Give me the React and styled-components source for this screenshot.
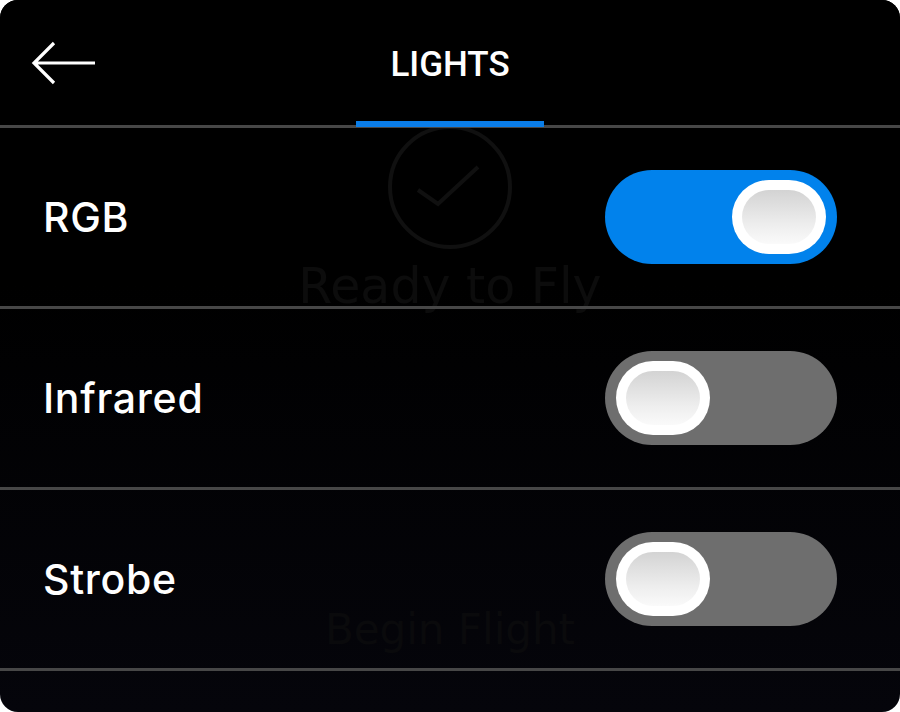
import React, { useState } from "react";
import styled, { createGlobalStyle } from "styled-components";

const GlobalStyle = createGlobalStyle`
  html, body {
    margin: 0;
    padding: 0;
    background: #ffffff;
  }
  * {
    box-sizing: border-box;
  }
`;

const Panel = styled.div`
  position: relative;
  width: 900px;
  height: 712px;
  border-radius: 18px;
  overflow: hidden;
  background: linear-gradient(180deg, #000000 0%, #000000 40%, #05050b 100%);
  font-family: "Inter", "Noto Sans", sans-serif;
`;

const Backdrop = styled.div`
  position: absolute;
  inset: 0;
  display: flex;
  flex-direction: column;
  align-items: center;
  padding-top: 126px;
  pointer-events: none;
  z-index: 0;
  font-family: "DejaVu Sans", "Inter", sans-serif;
`;

const GhostTitle = styled.div`
  margin-top: 2px;
  font-size: 49px;
  font-weight: 400;
  color: #0c0c0c;
`;

const GhostButton = styled.div`
  margin-top: 290px;
  font-size: 42px;
  font-weight: 400;
  color: #0a0a0c;
`;

const Content = styled.div`
  position: relative;
  z-index: 1;
  display: flex;
  flex-direction: column;
`;

const Header = styled.div`
  position: relative;
  height: 128px;
  display: flex;
  align-items: center;
  justify-content: center;
  background: #000000;
  border-bottom: 3px solid #474747;
`;

const BackButton = styled.button`
  position: absolute;
  left: 30px;
  top: 38px;
  width: 70px;
  height: 50px;
  padding: 0;
  border: none;
  background: none;
  cursor: pointer;
  display: flex;
  align-items: center;
`;

const Tab = styled.div`
  position: relative;
  height: 100%;
  width: 188px;
  display: flex;
  justify-content: center;
  padding-top: 45px;
  font-family: "Roboto", "Liberation Sans", sans-serif;
  font-size: 35px;
  font-weight: 500;
  color: #ffffff;
  line-height: 1;
  border-bottom: 6px solid #0a7de8;
  margin-bottom: -3px;
`;

const Row = styled.div`
  height: 181px;
  display: flex;
  align-items: center;
  justify-content: space-between;
  padding: 0 63px 0 43px;
  border-bottom: 3px solid #474747;
`;

const Label = styled.span`
  font-size: 41px;
  font-weight: 500;
  color: #ffffff;
  letter-spacing: 0.7px;
`;

const Track = styled.button`
  position: relative;
  width: 232px;
  height: 94px;
  border-radius: 47px;
  border: none;
  padding: 0 11px;
  cursor: pointer;
  display: flex;
  align-items: center;
  justify-content: ${({ on }) => (on ? "flex-end" : "flex-start")};
  background: ${({ on }) => (on ? "#0182ec" : "#6e6e6e")};
`;

const Knob = styled.span`
  width: 94px;
  height: 74px;
  border-radius: 37px;
  background: #ffffff;
  padding: 10px;
  display: flex;
`;

const KnobFace = styled.span`
  flex: 1;
  border-radius: 27px;
  background: linear-gradient(180deg, #d3d3d3 0%, #eeeeee 65%, #fafafa 100%);
`;

function Toggle({ on, onClick }) {
  return (
    <Track on={on ? 1 : 0} onClick={onClick}>
      <Knob>
        <KnobFace />
      </Knob>
    </Track>
  );
}

export default function App() {
  const [lights, setLights] = useState({ RGB: true, Infrared: false, Strobe: false });

  const flip = (name) => setLights((s) => ({ ...s, [name]: !s[name] }));

  return (
    <>
      <GlobalStyle />
      <Panel>
        <Backdrop>
          <svg width="130" height="130" viewBox="0 0 130 130">
            <circle cx="65" cy="61" r="60" fill="none" stroke="#101010" strokeWidth="4" />
            <path d="M33 64 L53 78 L93 41" fill="none" stroke="#101010" strokeWidth="4" />
          </svg>
          <GhostTitle>Ready to Fly</GhostTitle>
          <GhostButton>Begin Flight</GhostButton>
        </Backdrop>
        <Content>
          <Header>
            <BackButton aria-label="Back">
              <svg width="66" height="46" viewBox="0 0 66 46">
                <path d="M4 23 H65 M24 3 L4 23 L24 43" fill="none" stroke="#ffffff" strokeWidth="3.2" />
              </svg>
            </BackButton>
            <Tab>LIGHTS</Tab>
          </Header>
          {Object.keys(lights).map((name) => (
            <Row key={name}>
              <Label>{name}</Label>
              <Toggle on={lights[name]} onClick={() => flip(name)} />
            </Row>
          ))}
        </Content>
      </Panel>
    </>
  );
}
